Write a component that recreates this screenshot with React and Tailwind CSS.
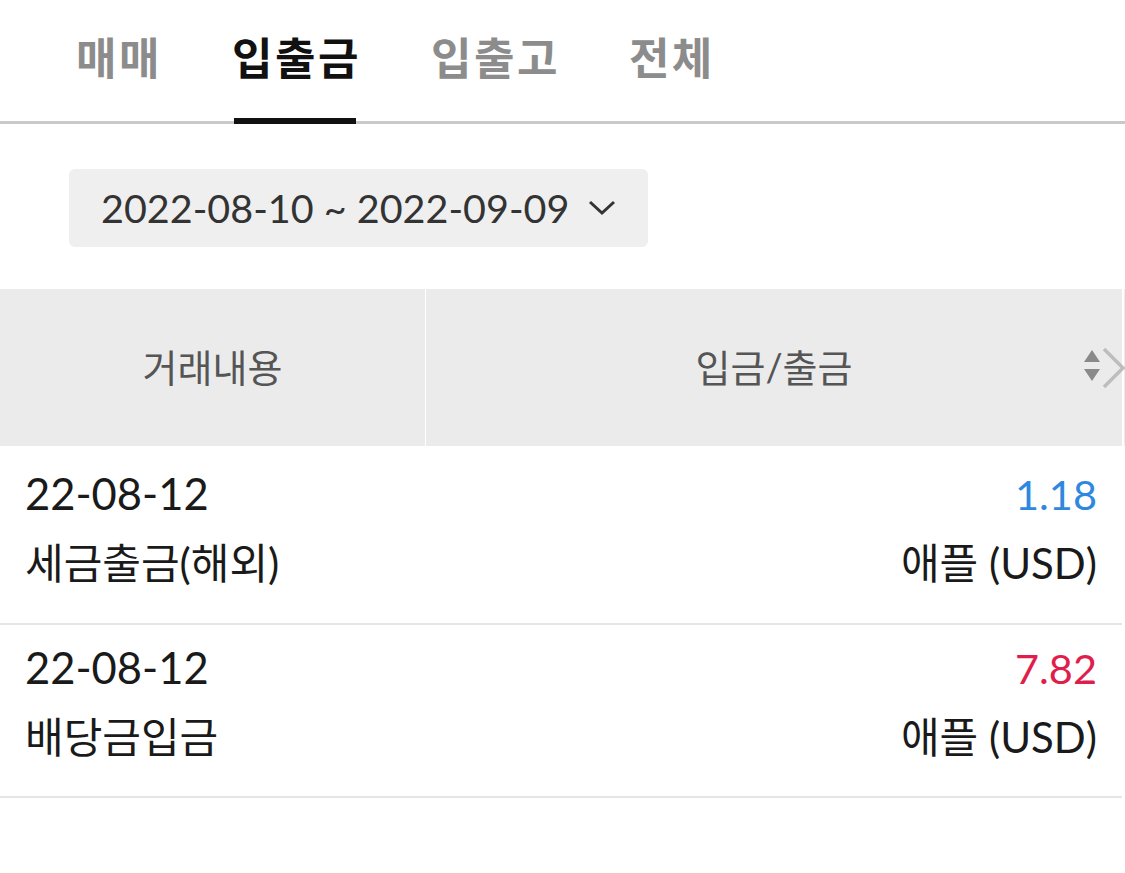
import React from "react";

const FONT = { fontFamily: "Lato, 'Noto Sans CJK KR', sans-serif" };

function Tabs() {
  const tabs = [
    { label: "매매", active: false, ml: "ml-0" },
    { label: "입출금", active: true, ml: "ml-[70px]" },
    { label: "입출고", active: false, ml: "ml-[70px]" },
    { label: "전체", active: false, ml: "ml-[69px]" },
  ];
  return (
    <div className="flex h-[124px] border-b-[3px] border-[#c9c9c9] pl-[76px]">
      {tabs.map((t) => (
        <div key={t.label} className={`relative flex h-full flex-col ${t.ml}`}>
          <div
            className={`pt-[28px] text-[44px] leading-[60px] font-bold tracking-[2.5px] ${
              t.active ? "text-[#111111]" : "text-[#8c8c8c]"
            }`}
          >
            {t.label}
          </div>
          {t.active && (
            <div className="absolute bottom-[-3px] left-[2px] right-[5px] h-[6px] bg-[#111111]" />
          )}
        </div>
      ))}
    </div>
  );
}

function DatePill() {
  return (
    <div className="pt-[45px] pl-[69px]">
      <div className="flex h-[78px] w-[579px] items-center rounded-[6px] bg-[#efefef] pl-[32px]">
        <span className="text-[39.5px] text-[#333333]">2022-08-10 ~ 2022-09-09</span>
        <svg className="ml-[18px]" width="30" height="18" viewBox="0 0 30 18" fill="none">
          <path d="M3 3 L15 14 L27 3" stroke="#333333" strokeWidth="3" />
        </svg>
      </div>
    </div>
  );
}

function Header() {
  return (
    <div className="mt-[42px] flex h-[157px] overflow-hidden">
      <div className="flex w-[425px] shrink-0 items-center justify-center bg-[#ebebeb] text-[38px] text-[#555555]">
        거래내용
      </div>
      <div className="w-[1px] shrink-0 bg-white" />
      <div className="relative flex w-[696px] shrink-0 items-center justify-center bg-[#ebebeb] text-[38px] text-[#555555]">
        입금/출금
        <svg className="absolute right-[21px] top-[60px]" width="18" height="33" viewBox="0 0 18 33">
          <path d="M9 1 L17 13 L1 13 Z" fill="#8a8a8a" />
          <path d="M1 20 L17 20 L9 32 Z" fill="#8a8a8a" />
        </svg>
      </div>
      <div className="w-[2px] shrink-0 bg-white" />
      <div className="relative w-[40px] shrink-0 bg-[#ebebeb]">
        <svg className="absolute left-[-23px] top-[58px]" width="26" height="42" viewBox="0 0 26 42" fill="none">
          <path d="M3 2 L22 21 L3 40" stroke="#bdbdbd" strokeWidth="3.5" />
        </svg>
      </div>
    </div>
  );
}

function Row({ date, desc, amount, color, h, pt }) {
  return (
    <div className={`flex w-[1122px] flex-col border-b-2 border-[#e6e6e6] px-[25px] ${h} ${pt}`}>
      <div className="flex h-[50px] items-center justify-between">
        <span className="text-[43.5px] text-[#1a1a1a]">{date}</span>
        <span className="text-[41.5px]" style={{ color }}>{amount}</span>
      </div>
      <div className="mt-[19px] flex h-[50px] items-center justify-between">
        <span className="text-[42px] text-[#1a1a1a]">{desc}</span>
        <span className="text-[42px] text-[#1a1a1a]">
          애플 <span className="text-[42px]">(USD)</span>
        </span>
      </div>
    </div>
  );
}

export default function App() {
  return (
    <div className="h-[873px] w-[1125px] overflow-hidden bg-white" style={FONT}>
      <Tabs />
      <DatePill />
      <Header />
      <Row date="22-08-12" desc="세금출금(해외)" amount="1.18" color="#2f88df" h="h-[179px]" pt="pt-[23px]" />
      <Row date="22-08-12" desc="배당금입금" amount="7.82" color="#e01e4c" h="h-[173px]" pt="pt-[18px]" />
    </div>
  );
}
